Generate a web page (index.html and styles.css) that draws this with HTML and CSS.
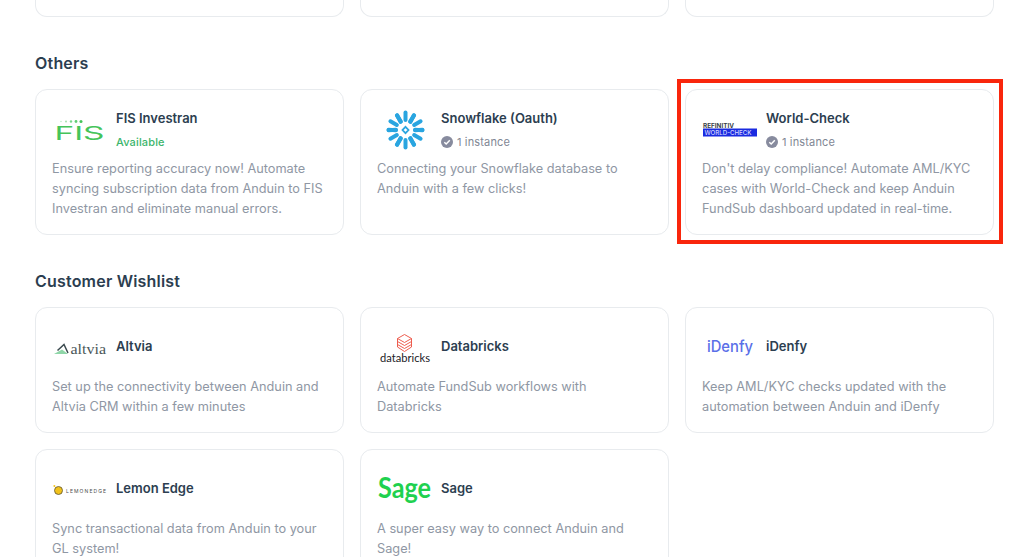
FILE: index.html
```html
<!DOCTYPE html>
<html lang="en">
<head>
  <meta charset="UTF-8" />
  <title>Integrations</title>
  <link rel="stylesheet" href="styles.css">
</head>
<body>

  <main class="page">
    <!-- row cut off by the scroll position -->
    <div class="grid">
      <div class="card card-cut"></div>
      <div class="card card-cut"></div>
      <div class="card card-cut"></div>
    </div>

    <h2>Others</h2>
    <div class="grid">
      <div class="card">
        <div class="card-head">
          <svg class="logo" viewBox="0 0 64 48">
            <g fill="#45c45a">
              <circle cx="9" cy="15.5" r=".7" opacity=".4"/>
              <circle cx="14" cy="15.5" r="1" opacity=".5"/>
              <circle cx="19" cy="15.5" r="1.2" opacity=".7"/>
              <circle cx="24" cy="15.5" r="1.4" opacity=".85"/>
              <circle cx="29" cy="15.5" r="1.5"/>
            </g>
            <text class="logo-fis" x="2.5" y="34" textLength="50" lengthAdjust="spacingAndGlyphs">FIS</text>
          </svg>
          <div class="info">
            <div class="title">FIS Investran</div>
            <div class="status status-ok">Available</div>
          </div>
        </div>
        <p>Ensure reporting accuracy now! Automate syncing subscription data from Anduin to FIS Investran and eliminate manual errors.</p>
      </div>

      <div class="card">
        <div class="card-head">
          <svg class="logo" viewBox="0 0 64 48">
            <g transform="translate(28.5 24)" fill="none" stroke="#29a5e0" stroke-width="4" stroke-linecap="round">
              <g id="arm">
                <path d="M0 -10V-17.4"/>
                <path d="M-4.6 -8.4L-8.6 -14.6"/>
                <path d="M4.6 -8.4L8.6 -14.6"/>
              </g>
              <use href="#arm" transform="rotate(60)"/>
              <use href="#arm" transform="rotate(120)"/>
              <use href="#arm" transform="rotate(180)"/>
              <use href="#arm" transform="rotate(240)"/>
              <use href="#arm" transform="rotate(300)"/>
              <path d="M0 -3.2L3 0L0 3.2L-3 0Z" stroke-width="1.8" stroke-linecap="butt"/>
            </g>
          </svg>
          <div class="info">
            <div class="title">Snowflake (Oauth)</div>
            <div class="status">
              <svg class="check" viewBox="0 0 12 12"><circle cx="6" cy="6" r="6" fill="#878b9e"/><path d="M3.3 6.2L5.2 8L8.8 4.3" fill="none" stroke="#fff" stroke-width="1.5"/></svg>
              1 instance
            </div>
          </div>
        </div>
        <p>Connecting your Snowflake database to Anduin with a few clicks!</p>
      </div>

      <div class="card">
        <div class="card-head">
          <svg class="logo" viewBox="0 0 64 48">
            <text class="logo-refinitiv" x="1" y="21.5" textLength="31" lengthAdjust="spacingAndGlyphs">REFINITIV</text>
            <rect x="1" y="22.5" width="54" height="8" fill="#1a2be0"/>
            <text class="logo-wc" x="2.5" y="29" textLength="47" lengthAdjust="spacingAndGlyphs">WORLD-CHECK</text>
          </svg>
          <div class="info">
            <div class="title">World-Check</div>
            <div class="status">
              <svg class="check" viewBox="0 0 12 12"><circle cx="6" cy="6" r="6" fill="#878b9e"/><path d="M3.3 6.2L5.2 8L8.8 4.3" fill="none" stroke="#fff" stroke-width="1.5"/></svg>
              1 instance
            </div>
          </div>
        </div>
        <p>Don't delay compliance! Automate AML/KYC cases with World-Check and keep Anduin FundSub dashboard updated in real-time.</p>
      </div>
    </div>

    <h2>Customer Wishlist</h2>
    <div class="grid">
      <div class="card">
        <div class="card-head">
          <svg class="logo" viewBox="0 0 64 48">
            <path d="M2 30L10 25.5L16 30Z" fill="#8fd6a8"/>
            <path d="M5.5 26.5L12 20.5L16 29" fill="none" stroke="#3b4a4f" stroke-width="1.5"/>
            <text class="logo-altvia" x="18.5" y="29.5" textLength="35.5" lengthAdjust="spacingAndGlyphs">altvia</text>
          </svg>
          <div class="info">
            <div class="title">Altvia</div>
          </div>
        </div>
        <p>Set up the connectivity between Anduin and Altvia CRM within a few minutes</p>
      </div>

      <div class="card">
        <div class="card-head">
          <svg class="logo" viewBox="0 0 64 48">
            <g fill="none" stroke="#ee5c4e" stroke-width="1" transform="translate(-4.5 0)">
              <path d="M32 10.5L39 14.5L32 18.5L25 14.5Z"/>
              <path d="M25 17.5L32 21.5L39 17.5"/>
              <path d="M25 20.5L32 24.5L39 20.5"/>
              <path d="M25 14.5V23L32 27.5L39 23V14.5"/>
            </g>
            <text class="logo-databricks" x="3" y="37.5" textLength="50" lengthAdjust="spacingAndGlyphs">databricks</text>
          </svg>
          <div class="info">
            <div class="title">Databricks</div>
          </div>
        </div>
        <p>Automate FundSub workflows with Databricks</p>
      </div>

      <div class="card">
        <div class="card-head">
          <svg class="logo" viewBox="0 0 64 48">
            <text class="logo-idenfy" x="5" y="28" textLength="46" lengthAdjust="spacingAndGlyphs">iDenfy</text>
          </svg>
          <div class="info">
            <div class="title">iDenfy</div>
          </div>
        </div>
        <p>Keep AML/KYC checks updated with the automation between Anduin and iDenfy</p>
      </div>

      <div class="card">
        <div class="card-head">
          <svg class="logo" viewBox="0 0 64 48">
            <circle cx="6.5" cy="24.5" r="4" fill="#f2c21a" stroke="#5d5535" stroke-width=".8"/>
            <circle cx="2.4" cy="20" r="1" fill="#f2c21a"/>
            <text class="logo-lemon" x="14" y="26.5" textLength="40" lengthAdjust="spacing">LEMONEDGE</text>
          </svg>
          <div class="info">
            <div class="title">Lemon Edge</div>
          </div>
        </div>
        <p>Sync transactional data from Anduin to your GL system!</p>
      </div>

      <div class="card">
        <div class="card-head">
          <svg class="logo" viewBox="0 0 64 48">
            <text class="logo-sage" x="1" y="32" textLength="53" lengthAdjust="spacingAndGlyphs">Sage</text>
          </svg>
          <div class="info">
            <div class="title">Sage</div>
          </div>
        </div>
        <p>A super easy way to connect Anduin and Sage!</p>
      </div>
    </div>
  </main>

  <!-- annotation box around the World-Check card -->
  <div class="highlight"></div>

</body>
</html>
```

FILE: styles.css
```css
html, body {
  height: 557px;
  overflow: hidden;
}

body {
  font-family: Inter, "Liberation Sans", sans-serif;
  margin: 0;
  background: #fff;
  color: #2c3e50;
  position: relative;
}

.page {
  padding: 0 15px 0 35px;
}

h2 {
  font-size: 16px;
  font-weight: 600;
  letter-spacing: .2px;
  line-height: 24px;
  margin: 34px 0 14px;
}

.grid {
  display: grid;
  grid-template-columns: repeat(3, 309px);
  gap: 16px;
}

.card {
  background: #fff;
  border: 1px solid #e8ebee;
  border-radius: 12px;
  padding: 16px 16px 15px;
}

.card-cut {
  height: 17px;
  padding: 0;
  border-top: none;
  border-radius: 0 0 12px 12px;
  box-sizing: border-box;
}

.card-head {
  display: flex;
  align-items: center;
  height: 53px;
  padding-bottom: 5px;
  box-sizing: border-box;
}

.logo {
  flex: none;
  width: 64px;
  height: 48px;
}

.title {
  font-size: 13px;
  font-weight: 600;
  line-height: 20px;
  margin-bottom: 4px;
}

.status {
  display: flex;
  align-items: center;
  gap: 4px;
  font-size: 11px;
  letter-spacing: .15px;
  line-height: 20px;
  color: #7f8794;
}

.status-ok {
  font-weight: 500;
  color: #3cb56c;
}

.check {
  width: 12px;
  height: 12px;
}

.card p {
  margin: 0;
  font-size: 12.75px;
  line-height: 20px;
  color: #8f97a4;
}

.highlight {
  position: absolute;
  left: 677px;
  top: 79px;
  width: 318px;
  height: 157px;
  border: 4px solid #f9260c;
}

/* logos */
.logo-fis {
  font-size: 19px;
  fill: #45c45a;
}

.logo-refinitiv {
  font-size: 6px;
  font-weight: 700;
  fill: #3a3f47;
}

.logo-wc {
  font-size: 6.4px;
  font-weight: 500;
  fill: #d5d9ff;
}

.logo-altvia {
  font-family: "Liberation Serif", serif;
  font-size: 14px;
  fill: #4a5658;
}

.logo-databricks {
  font-family: Lato, sans-serif;
  font-size: 12px;
  fill: #1b2126;
}

.logo-idenfy {
  font-size: 16px;
  font-weight: 500;
  fill: #5a6fe8;
}

.logo-lemon {
  font-size: 5px;
  fill: #4a4a4a;
}

.logo-sage {
  font-family: Lato, sans-serif;
  font-size: 28px;
  font-weight: 700;
  fill: #1fd14f;
}
```
